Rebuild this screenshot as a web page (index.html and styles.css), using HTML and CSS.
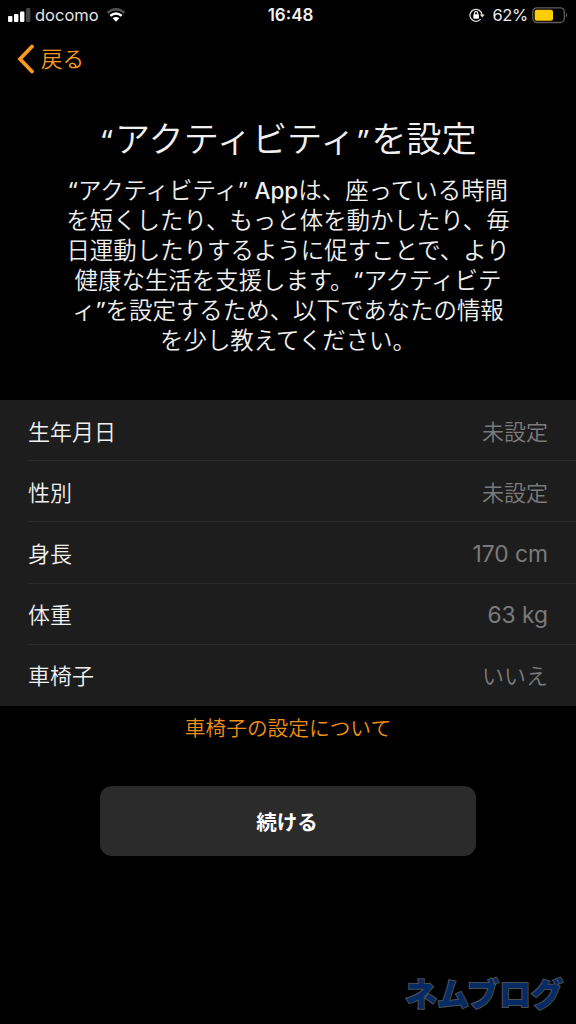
FILE: index.html
```html
<!DOCTYPE html>
<html lang="ja">
<head>
<meta charset="utf-8">
<title>アクティビティ</title>
<link rel="stylesheet" href="styles.css">
</head>
<body>
<div class="screen">
  <header class="status">
    <div class="status-left">
      <svg class="signal" width="23" height="14" viewBox="0 0 23 14"><rect x="0" y="8" width="4.4" height="6" rx="1" fill="#fff"/><rect x="6" y="6" width="4.4" height="8" rx="1" fill="#fff"/><rect x="12" y="3.5" width="4.4" height="10.500" rx="1" fill="#fff"/><rect x="18" y="0" width="4.400" height="14" rx="1" fill="#444"/></svg>
      <span class="carrier">docomo</span>
      <svg class="wifi" width="20" height="14" viewBox="0 0 20 14" fill="none"><path d="M1.500 4.800Q10-2.300 18.500 4.800" stroke="#555" stroke-width="2.400"/><path d="M4.300 7.700Q10 3.200 15.700 7.700" stroke="#fff" stroke-width="2.500"/><path d="M6.600 10.200Q10 7.600 13.400 10.200L10 13.700Z" fill="#fff"/></svg>
    </div>
    <span class="time">16:48</span>
    <div class="status-right">
      <svg class="lock" width="17" height="15" viewBox="0 0 17 15" fill="none"><path d="M11.600 11.200A6 6 0 1 1 13 7" stroke="#ddd" stroke-width="1.300"/><path d="M10.800 6.500H15.800L13.300 9.500Z" fill="#ddd"/><rect x="4.300" y="6.300" width="5.600" height="4.400" rx=".6" fill="#fff"/><path d="M5.500 6.800V5.200a1.600 1.600 0 0 1 3.200 0V6.800" stroke="#fff" stroke-width="1.100"/></svg>
      <span class="percent">62%</span>
      <svg class="battery" width="37" height="17" viewBox="0 0 37 17"><rect x=".8" y=".8" width="31.500" height="14.700" rx="4" fill="none" stroke="#665d58" stroke-width="1.300"/><rect x="2.700" y="2.700" width="18.300" height="11" rx="2" fill="#ffcc00"/><path d="M34 5.500Q36.500 8 34 10.700Z" fill="#665d58"/></svg>
    </div>
  </header>
  <nav class="nav">
    <svg width="18" height="30" viewBox="0 0 18 30"><path d="M16 2.500L4 15L16 27.500" fill="none" stroke="#f99a1c" stroke-width="3.800" stroke-linecap="round"/></svg>
    <span class="back">戻る</span>
  </nav>
  <h1 class="title"><span class="quote">“</span>アクティビティ<span class="quote">”</span>を設定</h1>
  <p class="intro"><span class="quote">“</span>アクティビティ<span class="quote">”</span> <span class="app">App</span>は、座っている時間<br>を短くしたり、もっと体を動かしたり、毎<br>日運動したりするように促すことで、より<br>健康な生活を支援します。<span class="quote">“</span>アクティビテ<br>ィ<span class="quote">”</span>を設定するため、以下であなたの情報<br>を少し教えてください。</p>
  <div class="list">
    <div class="row"><span>生年月日</span><span class="value">未設定</span></div>
    <div class="row"><span>性別</span><span class="value">未設定</span></div>
    <div class="row"><span>身長</span><span class="value latin">170 cm</span></div>
    <div class="row"><span>体重</span><span class="value latin">63 kg</span></div>
    <div class="row"><span>車椅子</span><span class="value">いいえ</span></div>
  </div>
  <a class="about">車椅子の設定について</a>
  <button class="continue">続ける</button>
  <div class="brand">ネムブログ</div>
</div>
</body>
</html>
```
FILE: styles.css
```css
* { box-sizing: border-box; }
body { margin: 0; background: #000; }
.screen {
  width: 576px;
  height: 1024px;
  overflow: hidden;
  display: flex;
  flex-direction: column;
  align-items: center;
  background: #000;
  color: #f0f0f0;
  font-family: Inter, "Noto Sans CJK JP", sans-serif;
  font-weight: 350;
}
.status {
  width: 100%;
  height: 30px;
  padding: 0 7px 0 8px;
  display: grid;
  grid-template-columns: 1fr auto 1fr;
  align-items: center;
  flex: none;
}
.status-left, .status-right { display: flex; align-items: center; }
.status-right { justify-content: flex-end; }
.carrier { font-size: 16.500px; font-weight: 400; margin: 0 7px 0 4px; color: #e4e4e4; }
.wifi { margin-bottom: 1px; }
.time { font-size: 17px; font-weight: 600; padding-left: 4px; }
.percent { font-size: 16.500px; font-weight: 400; letter-spacing: -.3px; margin: 0 4px 0 6px; }
.nav {
  width: 100%;
  height: 58px;
  padding: 0 0 0 16px;
  display: flex;
  align-items: center;
  gap: 7px;
  flex: none;
  color: #f99a1c;
}
.back { font-size: 21.5px; line-height: 30px; }
.title {
  margin: 25px 0 0;
  height: 52px;
  line-height: 52px;
  font-size: 35.200px;
  font-weight: 350;
  white-space: nowrap;
  flex: none;
}
.quote { font-family: "Noto Sans", sans-serif; font-weight: 400; line-height: 1; margin: 0 .5px 0 1px; }
.title .quote { font-size: 30px; margin: 0 2.500px; }
.intro {
  margin: 11px 0 0;
  height: 180px;
  line-height: 30px;
  font-size: 23.450px;
  text-align: center;
  white-space: nowrap;
  flex: none;
}
.app { font-weight: 500; font-size: 22.500px; }
.list {
  width: 100%;
  margin-top: 44px;
  height: 306px;
  display: grid;
  grid-template-rows: repeat(5, 1fr);
  background: #1d1d1d;
  flex: none;
}
.row {
  margin-left: 28px;
  padding: 0 28px 1px 0;
  display: flex;
  align-items: center;
  justify-content: space-between;
  font-size: 22px;
  border-bottom: 1px solid #292929;
}
.row:last-child { border-bottom-color: transparent; }
.value { color: #7b7b7b; }
.latin { font-weight: 400; font-size: 22.800px; padding-top: 3px; }
.about { margin-top: 8px; height: 30px; line-height: 30px; font-size: 20.700px; color: #ee8f16; flex: none; }
.continue {
  width: 376px;
  height: 70px;
  margin-top: 42px;
  padding: 0 2px 0 0;
  border: 0;
  border-radius: 12px;
  background: #2b2b2b;
  color: #fff;
  font: 700 20.500px/70px "Noto Sans CJK JP", sans-serif;
  flex: none;
}
.brand {
  align-self: flex-end;
  margin: 117px 13px 0 0;
  line-height: 44px;
  font-size: 32px;
  font-weight: 900;
  color: #062b64;
  -webkit-text-stroke: 2px #4c4e54;
  paint-order: stroke fill;
}
```
